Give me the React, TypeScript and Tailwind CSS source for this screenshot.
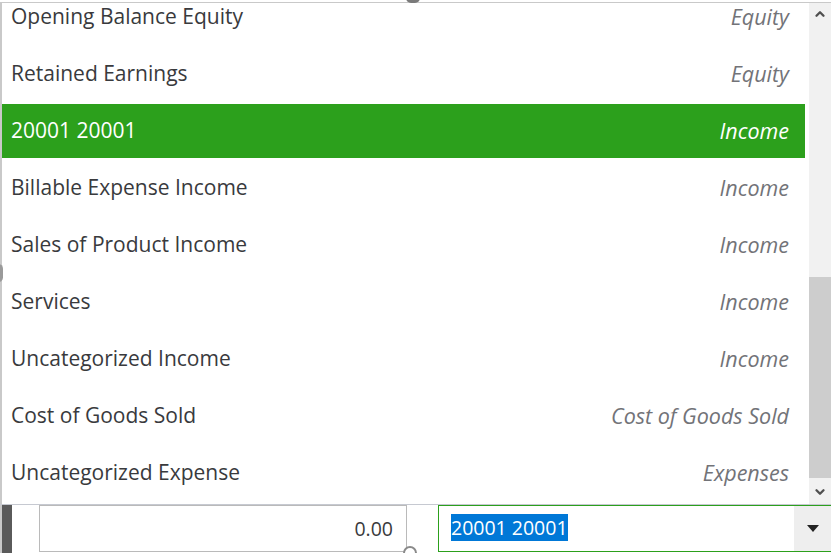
import { ChevronDown, ChevronUp } from "lucide-react";

type Account = { name: string; type: string };

const accounts: Account[] = [
  { name: "Opening Balance Equity", type: "Equity" },
  { name: "Retained Earnings", type: "Equity" },
  { name: "20001 20001", type: "Income" },
  { name: "Billable Expense Income", type: "Income" },
  { name: "Sales of Product Income", type: "Income" },
  { name: "Services", type: "Income" },
  { name: "Uncategorized Income", type: "Income" },
  { name: "Cost of Goods Sold", type: "Cost of Goods Sold" },
  { name: "Uncategorized Expense", type: "Expenses" },
];

const selected = "20001 20001";

export default function App() {
  return (
    <div
      className="relative w-[831px] h-[553px] overflow-hidden bg-white text-[#393a3d]"
      style={{ fontFamily: '"Open Sans", "Liberation Sans", sans-serif' }}
    >
      {/* account dropdown list */}
      <div className="flex h-[504px] pt-[2px]">
        <div className="flex flex-1 h-full border-t border-l-2 border-[#c9c9c9]">
          <div className="flex-1 h-full overflow-hidden pr-[4px]">
            <div className="-mt-[13px] flex flex-col gap-[3px]">
              {accounts.map((acc) => {
                const active = acc.name === selected;
                return (
                  <div
                    key={acc.name}
                    className={
                      "flex h-[54px] shrink-0 items-center justify-between pl-[9px] pr-[16px] text-[21px] " +
                      (active ? "bg-[#2ca01c] text-white" : "")
                    }
                  >
                    <span>{acc.name}</span>
                    <span className={"italic text-[21.5px] " + (active ? "text-white" : "text-[#727378]")}>{acc.type}</span>
                  </div>
                );
              })}
            </div>
          </div>

          {/* scrollbar */}
          <div className="flex w-[22px] h-full flex-col bg-[#f1f1f1]">
            <div className="flex h-[22px] items-center justify-center text-[#505050]">
              <ChevronUp className="h-[14px] w-[14px]" strokeWidth={4} />
            </div>
            <div className="flex-1 flex flex-col pt-[252px] pb-[2px]">
              <div className="flex-1 bg-[#cdcdcd]" />
            </div>
            <div className="flex h-[24px] items-center justify-center text-[#505050]">
              <ChevronDown className="h-[14px] w-[14px]" strokeWidth={4} />
            </div>
          </div>
        </div>
      </div>

      {/* edit row */}
      <div className="flex h-[49px] border-t border-[#c6c9d1]">
        <div className="w-[2px] bg-[#c9c9c9]" />
        <div className="w-[10px] bg-[#5a5a5a]" />
        <div className="w-[27px]" />
        <div className="flex w-[368px] h-[47px] items-center justify-end border border-[#bababa] pr-[13px] text-[19.5px]">
          0.00
        </div>
        <div className="w-[31px]" />
        <div className="flex flex-1 h-[47px] items-center border border-[#2ca01c] border-r-0">
          <div className="flex-1 pl-[12px]">
            <span className="bg-[#0078d7] text-white text-[19.5px] leading-[21px]">{selected}</span>
          </div>
          <div className="flex w-[37px] h-full items-center justify-center bg-[#eeeeee]">
            <div className="h-0 w-0 border-l-[6px] border-r-[6px] border-t-[7px] border-l-transparent border-r-transparent border-t-[#222]" />
          </div>
        </div>
      </div>

      {/* resize handles peeking in at the edges */}
      <div className="absolute left-[406px] top-[-7px] h-[10px] w-[14px] rounded-full bg-[#7a7a7a]" />
      <div className="absolute left-[-6px] top-[264px] h-[18px] w-[9px] rounded-full bg-[#9a9a9a]" />
      <div className="absolute left-[403px] top-[546px] h-[14px] w-[14px] rounded-full border-2 border-[#8a8a8a] bg-white" />
    </div>
  );
}
